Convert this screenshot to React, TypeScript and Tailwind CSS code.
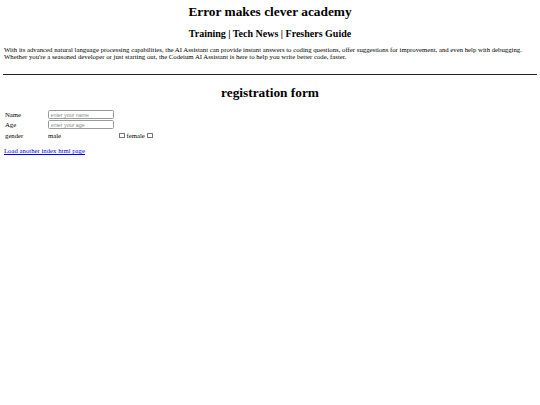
import React from "react";

const serif = { fontFamily: '"Liberation Serif", "Times New Roman", serif' };
const sans = { fontFamily: '"Liberation Sans", Arial, sans-serif' };

function Box() {
  return <span className="inline-block h-[5.5px] w-[5.5px] rounded-[0.5px] border border-[#767676] bg-white" />;
}

export default function App() {
  return (
    <div className="min-h-[405px] bg-white px-[4px] pt-[4px] leading-[1.15] text-black" style={serif}>
      {/* header */}
      <h1 className="text-center text-[13.33px] font-bold leading-[15px]">Error makes clever academy</h1>
      <h2 className="mt-[9px] text-center text-[10px] font-bold leading-[11px]">Training | Tech News | Freshers Guide</h2>
      <p className="mt-[6.5px] text-[6.75px] leading-[7.5px]">
        With its advanced natural language processing capabilities, the AI Assistant can provide instant answers to coding questions, offer suggestions for improvement, and even help with debugging. Whether you're a seasoned developer or just starting out, the Codeium AI Assistant is here to help you write better code, faster.
      </p>
      <hr className="mt-[13.5px] -mx-[1px] border-0 border-t-[1.5px] border-[#222]" />

      {/* registration */}
      <h1 className="mt-[9.5px] text-center text-[13.33px] font-bold leading-[15px]">registration form</h1>
      <form className="mt-[10.5px] flex flex-col gap-[1px] text-[6.75px] leading-[7.5px]">
        <div className="flex h-[9px] items-center">
          <span className="w-[44px] pl-[1px]">Name</span>
          <input
            type="text"
            placeholder="enter your name"
            className="h-[9px] w-[66px] rounded-[1.5px] border border-[#9a9a9a] px-[1.5px] text-[5.3px] outline-none placeholder:text-[#8a8a8a]"
            style={sans}
          />
        </div>
        <div className="flex h-[9px] items-center">
          <span className="w-[44px] pl-[1px]">Age</span>
          <input
            type="text"
            placeholder="enter your age"
            className="h-[9px] w-[66px] rounded-[1.5px] border border-[#9a9a9a] px-[1.5px] text-[5.3px] outline-none placeholder:text-[#8a8a8a]"
            style={sans}
          />
        </div>
        <div className="mt-[1px] flex h-[9px] items-center">
          <span className="w-[44px] pl-[1px]">gender</span>
          <span className="w-[71px]">male</span>
          <Box />
          <span className="ml-[2px] mr-[2.5px]">female</span>
          <Box />
        </div>
      </form>
      <div className="mt-[7px] text-[6.75px] leading-[7.5px]">
        <a href="#" className="text-[#0000ee] underline">
          Load another index html page
        </a>
      </div>
    </div>
  );
}
